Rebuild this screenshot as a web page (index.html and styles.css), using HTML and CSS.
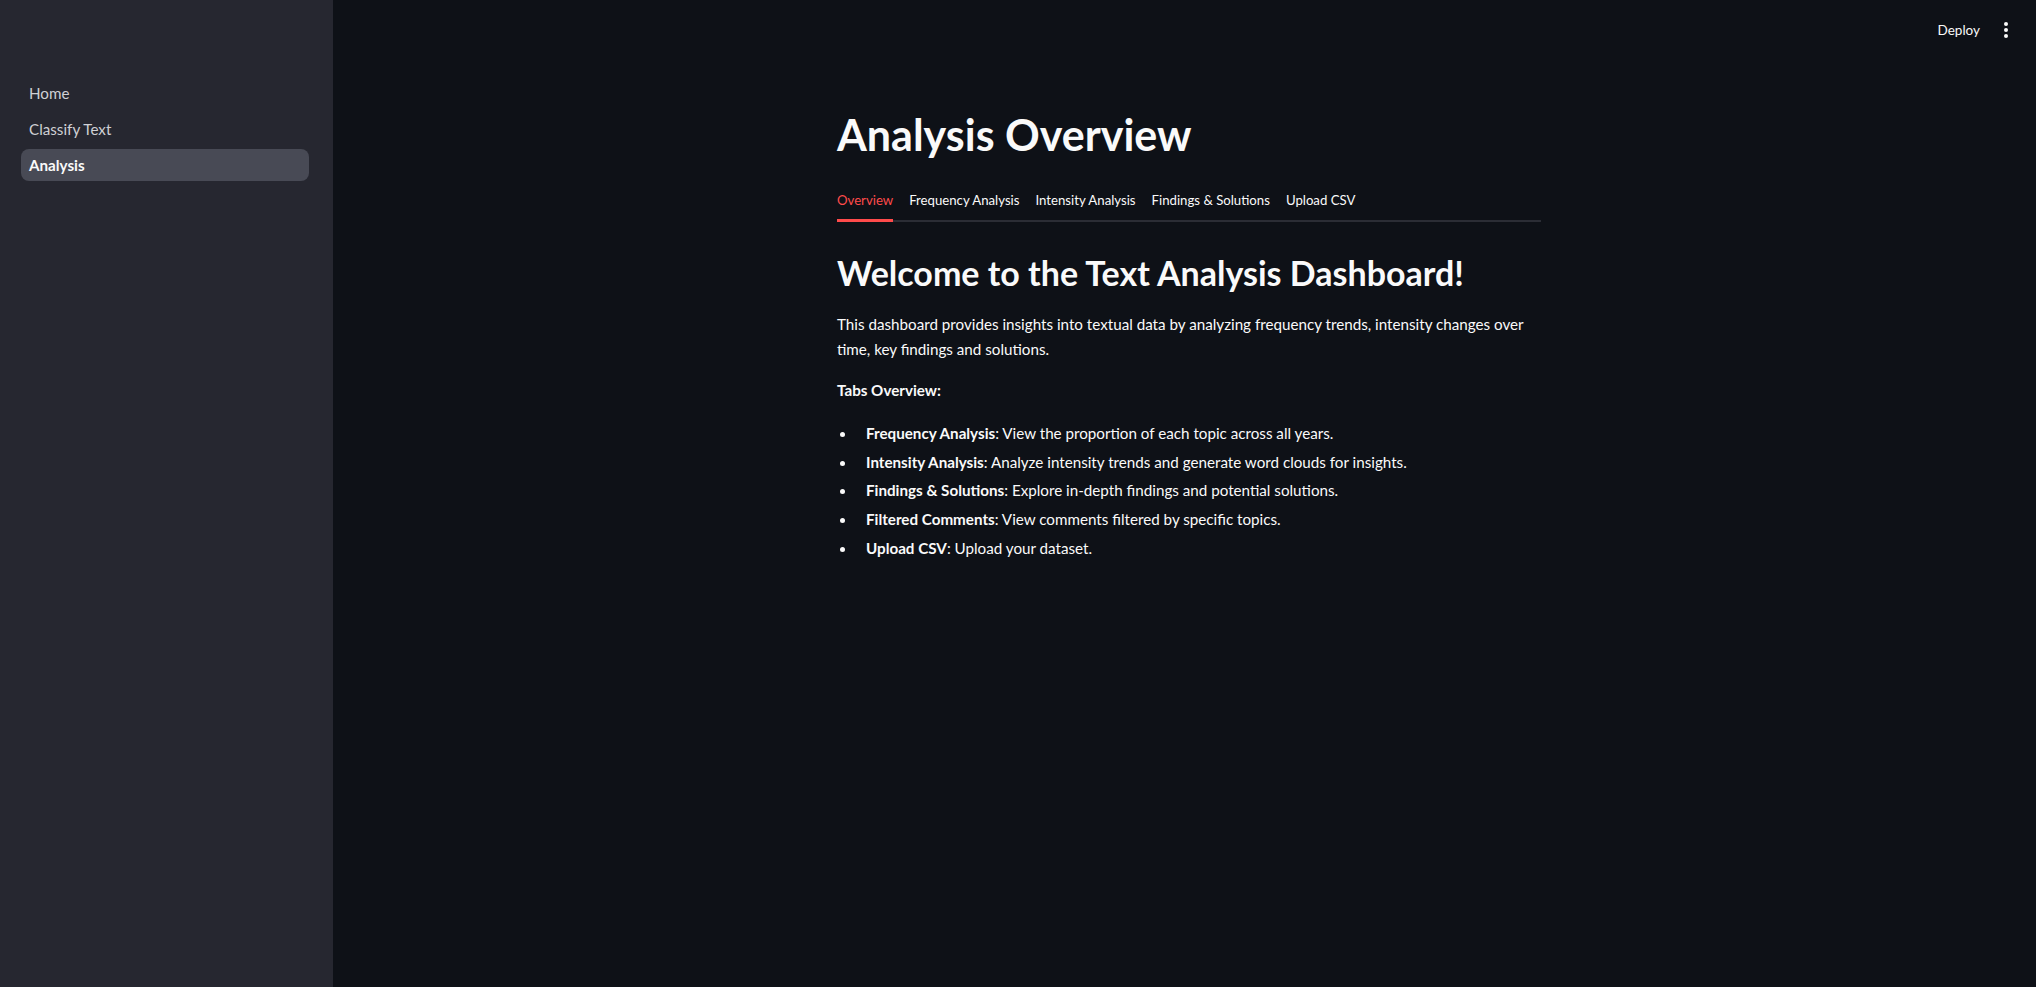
FILE: index.html
```html
<!DOCTYPE html>
<html lang="en">
<head>
<meta charset="utf-8">
<title>Analysis</title>
<link rel="stylesheet" href="styles.css">
</head>
<body>
<div class="app">
  <aside class="sidebar">
    <nav class="nav">
      <a class="nav-item">Home</a>
      <a class="nav-item">Classify Text</a>
      <a class="nav-item active">Analysis</a>
    </nav>
  </aside>
  <main class="main">
    <header class="topbar">
      <span class="deploy">Deploy</span>
      <span class="kebab"><i></i><i></i><i></i></span>
    </header>
    <div class="content">
      <div class="block">
        <h1 class="title">Analysis Overview</h1>
        <div class="tabs">
          <span class="tab active">Overview</span>
          <span class="tab">Frequency Analysis</span>
          <span class="tab">Intensity Analysis</span>
          <span class="tab">Findings &amp; Solutions</span>
          <span class="tab">Upload CSV</span>
        </div>
        <h2 class="welcome">Welcome to the Text Analysis Dashboard!</h2>
        <p class="para">This dashboard provides insights into textual data by analyzing frequency trends, intensity changes over time, key findings and solutions.</p>
        <p class="para label"><strong>Tabs Overview:</strong></p>
        <ul class="list">
          <li><span><strong>Frequency Analysis</strong>: View the proportion of each topic across all years.</span></li>
          <li><span><strong>Intensity Analysis</strong>: Analyze intensity trends and generate word clouds for insights.</span></li>
          <li><span><strong>Findings &amp; Solutions</strong>: Explore in-depth findings and potential solutions.</span></li>
          <li><span><strong>Filtered Comments</strong>: View comments filtered by specific topics.</span></li>
          <li><span><strong>Upload CSV</strong>: Upload your dataset.</span></li>
        </ul>
      </div>
    </div>
  </main>
</div>
</body>
</html>
```
FILE: styles.css
```css
* { box-sizing: border-box; }
html, body { margin: 0; padding: 0; height: 100%; }
body {
  background: #0e1117;
  color: #fafafa;
  font-family: "Source Sans Pro", Lato, "Noto Sans", sans-serif;
  font-size: 15.2px;
}
.app { display: flex; height: 100vh; }
.sidebar {
  width: 333px;
  flex-shrink: 0;
  background: #262730;
  padding: 76.5px 24px 0 21px;
}
.nav { display: flex; flex-direction: column; gap: 4px; }
.nav-item {
  height: 32px;
  display: flex;
  align-items: center;
  padding: 0 8px;
  border-radius: 8px;
  color: #cfd0d4;
  font-size: 15.2px;
}
.nav-item.active {
  background: #484a55;
  color: #fafafa;
  font-weight: 700;
}
.main { flex: 1; display: flex; flex-direction: column; min-width: 0; }
.topbar {
  height: 60px;
  display: flex;
  justify-content: flex-end;
  align-items: center;
  padding: 0 28px 0 0;
  gap: 24px;
}
.deploy { font-size: 13.5px; color: #fafafa; }
.kebab { display: flex; flex-direction: column; gap: 2px; width: 4px; }
.kebab i { display: block; width: 4px; height: 4px; border-radius: 50%; background: #fafafa; }
.content { display: flex; justify-content: center; padding-left: 9px; }
.block { width: 704px; padding-top: 49.3px; }
.title {
  margin: 0;
  font-size: 43px;
  line-height: 52.8px;
  font-weight: 700;
}
.tabs {
  margin-top: 17px;
  display: flex;
  gap: 16px;
  border-bottom: 2px solid #2b2d35;
  height: 43px;
}
.tab {
  height: 41px;
  display: flex;
  align-items: center;
  font-size: 13.2px;
  position: relative;
  color: #fafafa;
}
.tab.active { color: #ff4b4b; }
.tab.active::after {
  content: "";
  position: absolute;
  left: 0; right: 0; bottom: -2px;
  height: 3px;
  background: #ff4b4b;
}
.welcome {
  margin: 30.7px 0 0;
  font-size: 34px;
  line-height: 40.8px;
  font-weight: 700;
}
.para {
  margin: 18px 0 0;
  line-height: 25.6px;
}
.para.label { margin-top: 15.5px; }
.para strong, .list strong { font-weight: 700; }
.list { list-style: none; margin: 17px 0 0; padding: 0; }
.list li { display: flex; line-height: 25.6px; margin-bottom: 3.2px; }
.list li::before {
  content: "";
  flex-shrink: 0;
  width: 5px; height: 5px;
  border-radius: 50%;
  background: #fafafa;
  margin: 11px 21px 0 3px;
}
```
